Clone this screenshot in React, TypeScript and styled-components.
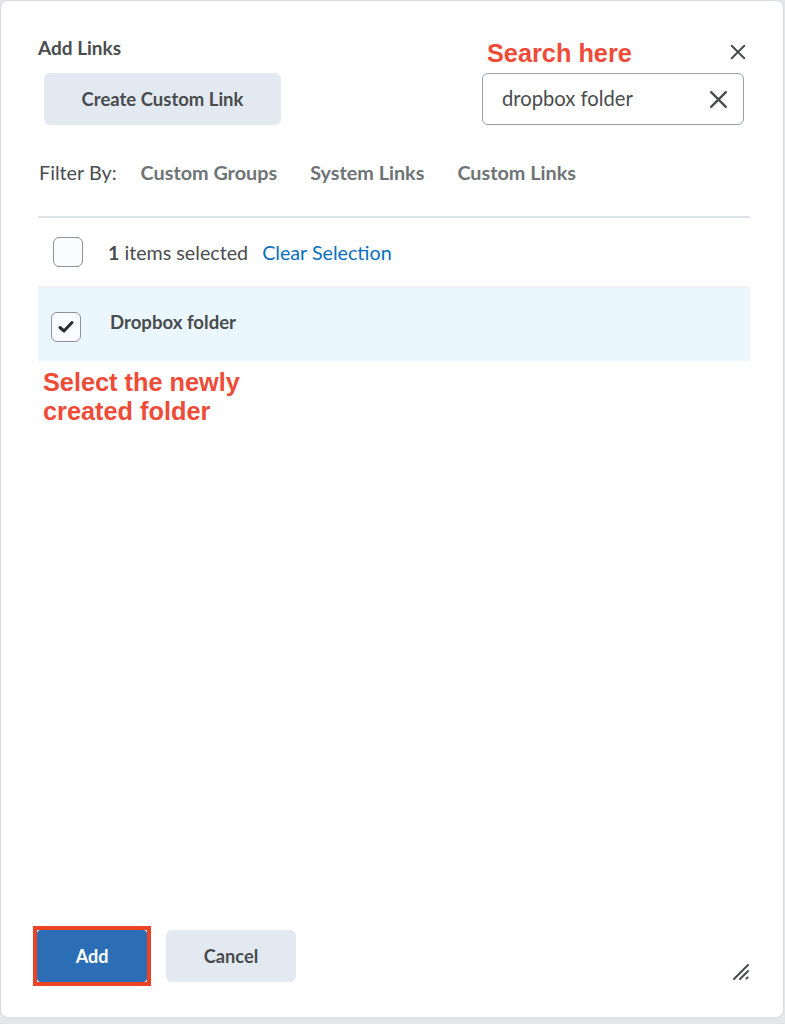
import React from "react";
import styled, { createGlobalStyle } from "styled-components";

const Global = createGlobalStyle`
  html, body { margin: 0; padding: 0; background: #e4e6e9; }
  body { font-family: Lato, "Noto Sans", sans-serif; color: #494c4e; }
  * { box-sizing: border-box; }
`;

const Dialog = styled.div`
  width: 784px;
  height: 1018px;
  background: #fff;
  border: 1px solid #d8dce2;
  border-radius: 8px;
  display: flex;
  flex-direction: column;
  padding: 0 33px 0 37px;
`;

const Header = styled.div`
  display: flex;
  align-items: flex-start;
  padding-top: 35px;
`;

const LeftCol = styled.div`
  flex: 1;
  display: flex;
  flex-direction: column;
`;

const Title = styled.h1`
  margin: 0;
  font-size: 19px;
  line-height: 24px;
  font-weight: 700;
  color: #494c4e;
  height: 37px;
`;

const GrayButton = styled.button<{ $w: number }>`
  width: ${(p) => p.$w}px;
  height: 52px;
  border: none;
  border-radius: 6px;
  background: #e3e9f1;
  color: #494c4e;
  font-family: Lato, sans-serif;
  font-weight: 700;
  font-size: 18.5px;
  padding: 0;
  cursor: pointer;
`;

const CreateButton = styled(GrayButton)`
  margin-left: 6px;
`;

const RightCol = styled.div`
  width: 266px;
  margin-right: 2px;
  display: flex;
  flex-direction: column;
`;

const NoteRow = styled.div`
  display: flex;
  align-items: flex-start;
  justify-content: space-between;
  height: 37px;
`;

const Annotation = styled.div`
  font-family: "Liberation Sans", Arial, sans-serif;
  font-weight: 700;
  font-size: 25.3px;
  line-height: 29px;
  color: #ee4b38;
`;

const SearchNote = styled(Annotation)`
  margin-top: 3px;
  margin-left: 5px;
`;

const IconButton = styled.button`
  border: none;
  background: transparent;
  padding: 0;
  display: flex;
  align-items: center;
  justify-content: center;
  cursor: pointer;
  color: #494c4e;
`;

const CloseButton = styled(IconButton)`
  width: 20px;
  height: 20px;
  margin-top: 6px;
`;

const SearchBox = styled.div`
  width: 262px;
  height: 52px;
  border: 1px solid #9b9fa3;
  border-radius: 6px;
  display: flex;
  align-items: center;
  padding: 0 14px 0 19px;
`;

const SearchText = styled.span`
  flex: 1;
  font-size: 20.2px;
  color: #494c4e;
  padding-bottom: 2px;
`;

const FilterRow = styled.div`
  display: flex;
  align-items: center;
  gap: 33px;
  height: 42px;
  margin-top: 26px;
  margin-left: 1px;
  font-size: 19.8px;
`;

const FilterLabel = styled.span`
  color: #494c4e;
  margin-right: -9px;
`;

const FilterItem = styled.span`
  font-weight: 700;
  color: #6e7376;
`;

const Divider = styled.div`
  height: 2px;
  background: #dfe3e9;
  margin-top: 23px;
`;

const SelectBar = styled.div`
  display: flex;
  align-items: center;
  height: 70px;
  padding-left: 15px;
  border-bottom: 2px solid #eef0f4;
  font-size: 19.7px;
`;

const Box = styled.span`
  width: 30px;
  height: 30px;
  border: 1.5px solid #8e9296;
  border-radius: 6px;
  background: #f9fbff;
  display: flex;
  align-items: center;
  justify-content: center;
  flex-shrink: 0;
`;

const SelectedCount = styled.span`
  margin-left: 25px;
  color: #494c4e;
  b { font-weight: 700; }
`;

const ClearLink = styled.a`
  margin-left: 14px;
  color: #0a6fbf;
  text-decoration: none;
  cursor: pointer;
`;

const ItemRow = styled.div`
  display: flex;
  align-items: flex-start;
  height: 73px;
  background: #eaf7fe;
  padding: 24px 0 0 13px;
`;

const ItemName = styled.span`
  margin-left: 29px;
  margin-top: -2px;
  font-size: 18.6px;
  line-height: 24px;
  font-weight: 700;
  color: #494c4e;
`;

const NoteBlock = styled.div`
  margin-top: 7px;
  margin-left: 5px;
`;

const Footer = styled.div`
  margin-top: auto;
  display: flex;
  align-items: center;
  height: 60px;
  margin-bottom: 31px;
  margin-left: -5px;
`;

const Highlight = styled.span`
  display: flex;
  border: 4px solid #ea4424;
`;

const PrimaryButton = styled.button`
  width: 110px;
  height: 52px;
  border: none;
  border-radius: 4px;
  background: #2c6eb5;
  color: #fff;
  font-family: Lato, sans-serif;
  font-weight: 700;
  font-size: 18px;
  cursor: pointer;
`;

const CancelButton = styled(GrayButton)`
  margin-left: 15px;
  font-size: 18.2px;
`;

const Resize = styled.span`
  margin-left: auto;
  margin-right: 0;
  margin-top: 30px;
  display: flex;
`;

const XIcon = ({ size }: { size: number }) => (
  <svg width={size} height={size} viewBox="0 0 20 20" fill="none">
    <path d="M3 3 L17 17 M17 3 L3 17" stroke="#494c4e" strokeWidth="2.2" strokeLinecap="round" />
  </svg>
);

export default function App() {
  return (
    <>
      <Global />
      <Dialog>
        <Header>
          <LeftCol>
            <Title>Add Links</Title>
            <CreateButton $w={237}>Create Custom Link</CreateButton>
          </LeftCol>
          <RightCol>
            <NoteRow>
              <SearchNote>Search here</SearchNote>
              <CloseButton aria-label="Close">
                <XIcon size={18} />
              </CloseButton>
            </NoteRow>
            <SearchBox>
              <SearchText>dropbox folder</SearchText>
              <IconButton aria-label="Clear search">
                <XIcon size={21} />
              </IconButton>
            </SearchBox>
          </RightCol>
        </Header>

        <FilterRow>
          <FilterLabel>Filter By:</FilterLabel>
          <FilterItem>Custom Groups</FilterItem>
          <FilterItem>System Links</FilterItem>
          <FilterItem>Custom Links</FilterItem>
        </FilterRow>
        <Divider />

        <SelectBar>
          <Box />
          <SelectedCount>
            <b>1</b> items selected
          </SelectedCount>
          <ClearLink>Clear Selection</ClearLink>
        </SelectBar>

        <ItemRow>
          <Box>
            <svg width="16" height="14" viewBox="0 0 16 14" fill="none">
              <path d="M2 7.5 L6 11 L14 2.5" stroke="#2a2c2e" strokeWidth="3" strokeLinecap="round" strokeLinejoin="round" />
            </svg>
          </Box>
          <ItemName>Dropbox folder</ItemName>
        </ItemRow>

        <NoteBlock>
          <Annotation>Select the newly</Annotation>
          <Annotation>created folder</Annotation>
        </NoteBlock>

        <Footer>
          <Highlight>
            <PrimaryButton>Add</PrimaryButton>
          </Highlight>
          <CancelButton $w={130}>Cancel</CancelButton>
          <Resize>
            <svg width="18" height="18" viewBox="0 0 18 18" fill="none">
              <path d="M2 17 L16 3 M8 17 L16 9 M14.5 16.5 L15.5 15.5" stroke="#494c4e" strokeWidth="2" strokeLinecap="round" />
            </svg>
          </Resize>
        </Footer>
      </Dialog>
    </>
  );
}
